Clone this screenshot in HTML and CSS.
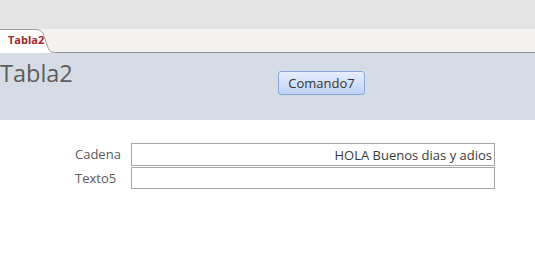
FILE: index.html
```html
<!DOCTYPE html>
<html lang="es">
<head>
<meta charset="utf-8">
<title>Tabla2</title>
<link rel="stylesheet" href="styles.css">
</head>
<body>
<div class="topbar"></div>
<div class="tabstrip">
  <div class="tab">
    <svg class="tab-shape" width="56" height="24" viewBox="0 0 56 24">
      <path d="M0 0.5 H37 Q41 0.5 43 4.5 L48.5 20 Q50 23.5 54 23.5 H56 V24 H0 Z" fill="#ffffff"/>
      <path d="M0 0.5 H37 Q41 0.5 43 4.5 L48.5 20 Q50 23.5 54 23.5 H56" fill="none" stroke="#a59e92" stroke-width="1"/>
    </svg>
    <span class="tab-label">Tabla2</span>
  </div>
</div>
<div class="header">
  <div class="title">Tabla2</div>
  <button class="cmd">Comando7</button>
</div>
<div class="form">
  <div class="row">
    <label class="lbl">Cadena</label>
    <div class="field first"><span>HOLA Buenos dias y adios</span></div>
  </div>
  <div class="row">
    <label class="lbl">Texto5</label>
    <div class="field second"></div>
  </div>
</div>
</body>
</html>
```
FILE: styles.css
```css
html, body {
  margin: 0;
  padding: 0;
  background: #ffffff;
  font-family: "Open Sans", "Noto Sans", "DejaVu Sans", sans-serif;
}
.topbar {
  height: 29px;
  background: #e4e4e4;
}
.tabstrip {
  height: 23px;
  background: #f3f2f1;
  border-bottom: 1px solid #8f8f8f;
  display: flex;
}
.tab {
  position: relative;
  width: 56px;
  height: 24px;
  z-index: 1;
}
.tab-shape {
  position: absolute;
  left: 0;
  top: 0;
}
.tab-label {
  position: relative;
  display: block;
  padding: 4px 0 0 8px;
  font-size: 11px;
  font-weight: 700;
  color: #a4262c;
  line-height: 14px;
}
.header {
  height: 67px;
  background: #d5dce6;
  display: flex;
  align-items: flex-start;
}
.title {
  width: 278px;
  font-size: 23.5px;
  line-height: 28px;
  color: #5c5c5c;
  margin-top: 6px;
}
.cmd {
  margin-top: 18px;
  width: 87px;
  height: 24px;
  padding: 0;
  border: 1px solid #8aa6dc;
  border-radius: 3px;
  background: linear-gradient(#e6eefc, #bfd2f6);
  font-family: inherit;
  font-size: 13px;
  color: #333333;
}
.form {
  padding: 23px 0 0 75px;
  display: flex;
  flex-direction: column;
  gap: 1px;
}
.row {
  display: flex;
  align-items: stretch;
}
.lbl {
  width: 56px;
  font-size: 13px;
  color: #595959;
  line-height: 18px;
  padding-top: 2px;
}
.field {
  width: 362px;
  border: 1px solid #a6a6a6;
  font-size: 13px;
  color: #3a3a3a;
  text-align: right;
  line-height: 18px;
  box-sizing: content-box;
}
.field.first {
  height: 21px;
}
.field.first span {
  display: block;
  padding: 2px 2px 0 0;
}
.field.second {
  height: 20px;
}
```
